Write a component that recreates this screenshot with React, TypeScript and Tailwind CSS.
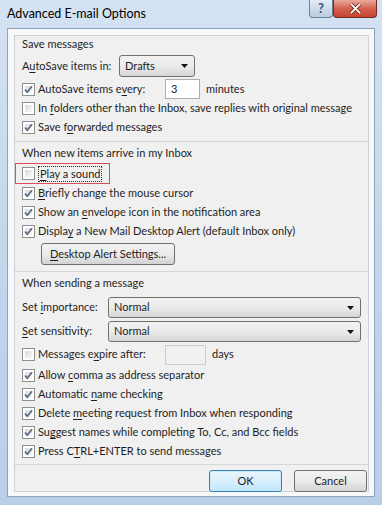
import React from 'react';

const font = { fontFamily: 'Lato, "Open Sans", sans-serif' };

function U({ children }: { children: React.ReactNode }) {
  return <span className="underline underline-offset-[2px] decoration-[1px]">{children}</span>;
}

function CheckBox({ checked }: { checked?: boolean }) {
  return (
    <span className="relative flex h-[13px] w-[13px] shrink-0 items-center justify-center border border-[#8e8f8f] bg-white">
      <span className="absolute inset-[2px] bg-gradient-to-br from-[#d5d9de] to-[#f8f9fa]" />
      {checked && (
        <svg viewBox="0 0 11 11" className="relative h-[11px] w-[11px]">
          <path d="M2 5.5 L4.3 8.2 L9 2.2" fill="none" stroke="#5b6b7f" strokeWidth="1.8" />
        </svg>
      )}
    </span>
  );
}

function CheckRow({ checked, children }: { checked?: boolean; children: React.ReactNode }) {
  return (
    <div className="flex h-[19px] items-center gap-[3px] whitespace-nowrap pl-[7px]">
      <CheckBox checked={checked} />
      <span>{children}</span>
    </div>
  );
}

function Arrow() {
  return (
    <svg viewBox="0 0 7 4" className="h-[4px] w-[7px]">
      <path d="M0 0 H7 L3.5 4 Z" fill="#111" />
    </svg>
  );
}

function Select({ value, className }: { value: string; className: string }) {
  return (
    <div
      className={`flex items-center justify-between rounded-[3px] border border-[#707070] bg-gradient-to-b from-[#f2f2f2] via-[#ebebeb] to-[#d6d6d6] pl-[5px] pr-[6px] ${className}`}
    >
      <span>{value}</span>
      <Arrow />
    </div>
  );
}

function Button({ children, className }: { children: React.ReactNode; className: string }) {
  return (
    <div
      className={`flex items-center justify-center whitespace-nowrap rounded-[3px] border bg-gradient-to-b ${className}`}
    >
      {children}
    </div>
  );
}

export default function App() {
  return (
    <div
      className="relative h-[505px] w-[382px] overflow-hidden bg-gradient-to-b from-[#d4e3f3] via-[#c2d6ec] to-[#b9cfe8] text-[11px] text-[#1e1e1e]"
      style={font}
    >
      {/* title bar */}
      <div className="flex h-[28px] items-center pl-[7px] text-[12.5px] text-black">Advanced E-mail Options</div>

      <div className="absolute right-[49px] top-0 flex h-[18px] w-[24px] items-center justify-center rounded-b-[4px] border border-t-0 border-[#6d7f96] bg-gradient-to-b from-[#e3ecf6] to-[#b8cce3] text-[13px] font-bold text-[#3b5478]">
        ?
      </div>
      <div className="absolute right-[5px] top-0 flex h-[18px] w-[44px] items-center justify-center rounded-b-[4px] border border-t-0 border-[#6b2c22] bg-gradient-to-b from-[#e9a99b] via-[#d4624e] to-[#c8422c]">
        <svg viewBox="0 0 14 12" className="h-[11px] w-[13px]">
          <path d="M2 1 L12 11 M12 1 L2 11" stroke="#5e2018" strokeWidth="3.6" />
          <path d="M2 1 L12 11 M12 1 L2 11" stroke="#fff" strokeWidth="2" />
        </svg>
      </div>

      {/* client area */}
      <div className="mx-[7px] h-[469px] border border-[#8ea3bb] bg-[#f6f8fa] pl-[6px] pr-[5px] pt-[6px]">
        <div className="flex h-[457px] flex-col border border-[#cdd1d6] bg-[#f0f0f0]">
          {/* section 1 */}
          <div className="flex flex-col whitespace-nowrap border-b border-[#d5d5d5] pb-[4px]">
            <div className="flex h-[16px] items-center pl-[7px]">Save messages</div>
            <div className="mt-[3px] flex h-[22px] items-center pl-[7px]">
              <span className="w-[97px]">
                A<U>u</U>toSave items in:
              </span>
              <Select value="Drafts" className="h-[22px] w-[76px]" />
            </div>
            <div className="mt-[2px] flex h-[20px] items-center gap-[3px] pl-[7px]">
              <CheckBox checked />
              <span className="w-[124px]">
                AutoSave items e<U>v</U>ery:
              </span>
              <div className="flex h-[20px] w-[35px] items-center border border-[#abadb3] bg-white pl-[5px]">3</div>
              <span className="ml-[3px]">minutes</span>
            </div>
            <CheckRow>
              In <U>f</U>olders other than the Inbox, save replies with original message
            </CheckRow>
            <CheckRow checked>
              Save f<U>o</U>rwarded messages
            </CheckRow>
          </div>

          {/* section 2 */}
          <div className="flex flex-col whitespace-nowrap border-b border-[#d5d5d5] pb-[6px] pt-[3px]">
            <div className="flex h-[16px] items-center pl-[7px]">When new items arrive in my Inbox</div>
            <div className="mt-[2px] flex h-[21px] w-[95px] items-center gap-[3px] border border-[#d9505a] pl-[6px]">
              <CheckBox />
              <span className="border border-dotted border-[#333] px-[1px] leading-[14px]">
                <U>P</U>lay a sound
              </span>
            </div>
            <CheckRow checked>
              <U>B</U>riefly change the mouse cursor
            </CheckRow>
            <CheckRow checked>
              Show an <U>e</U>nvelope icon in the notification area
            </CheckRow>
            <CheckRow checked>
              Displa<U>y</U> a New Mail Desktop Alert (default Inbox only)
            </CheckRow>
            <div className="mt-[2px] pl-[26px]">
              <Button className="h-[22px] w-[134px] border-[#707070] from-[#f2f2f2] via-[#ebebeb] to-[#d3d3d3]">
                <span>
                  <U>D</U>esktop Alert Settings...
                </span>
              </Button>
            </div>
          </div>

          {/* section 3 */}
          <div className="flex flex-col whitespace-nowrap border-b border-[#d5d5d5] pb-[3px] pt-[3px]">
            <div className="flex h-[16px] items-center pl-[7px]">When sending a message</div>
            <div className="mt-[6px] flex h-[21px] items-center pl-[7px]">
              <span className="w-[86px]">
                Set <U>i</U>mportance:
              </span>
              <Select value="Normal" className="h-[21px] w-[253px]" />
            </div>
            <div className="mt-[3px] flex h-[21px] items-center pl-[7px]">
              <span className="w-[86px]">
                <U>S</U>et sensitivity:
              </span>
              <Select value="Normal" className="h-[21px] w-[253px]" />
            </div>
            <div className="mt-[3px] flex h-[19px] items-center gap-[3px] pl-[7px]">
              <CheckBox />
              <span className="w-[124px]">
                Messages e<U>x</U>pire after:
              </span>
              <div className="h-[20px] w-[41px] border border-[#c9ccd1] bg-[#f0f0f0]" />
              <span className="ml-[3px]">days</span>
            </div>
            <div className="mt-[2px]" />
            <CheckRow checked>
              Allow <U>c</U>omma as address separator
            </CheckRow>
            <CheckRow checked>
              Automatic <U>n</U>ame checking
            </CheckRow>
            <CheckRow checked>
              Delete <U>m</U>eeting request from Inbox when responding
            </CheckRow>
            <CheckRow checked>
              Su<U>g</U>gest names while completing To, Cc, and Bcc fields
            </CheckRow>
            <CheckRow checked>
              Press C<U>T</U>RL+ENTER to send messages
            </CheckRow>
          </div>

          {/* buttons */}
          <div className="flex justify-end gap-[12px] pr-[1px] pt-[5px]">
            <Button className="h-[22px] w-[73px] border-[#3c7fb1] from-[#eaf6fd] via-[#d9f0fc] to-[#bee6fd] shadow-[inset_0_0_0_1px_#cbeafc]">
              OK
            </Button>
            <Button className="h-[22px] w-[73px] border-[#707070] from-[#f2f2f2] via-[#ebebeb] to-[#d3d3d3]">
              Cancel
            </Button>
          </div>
        </div>
      </div>
    </div>
  );
}
